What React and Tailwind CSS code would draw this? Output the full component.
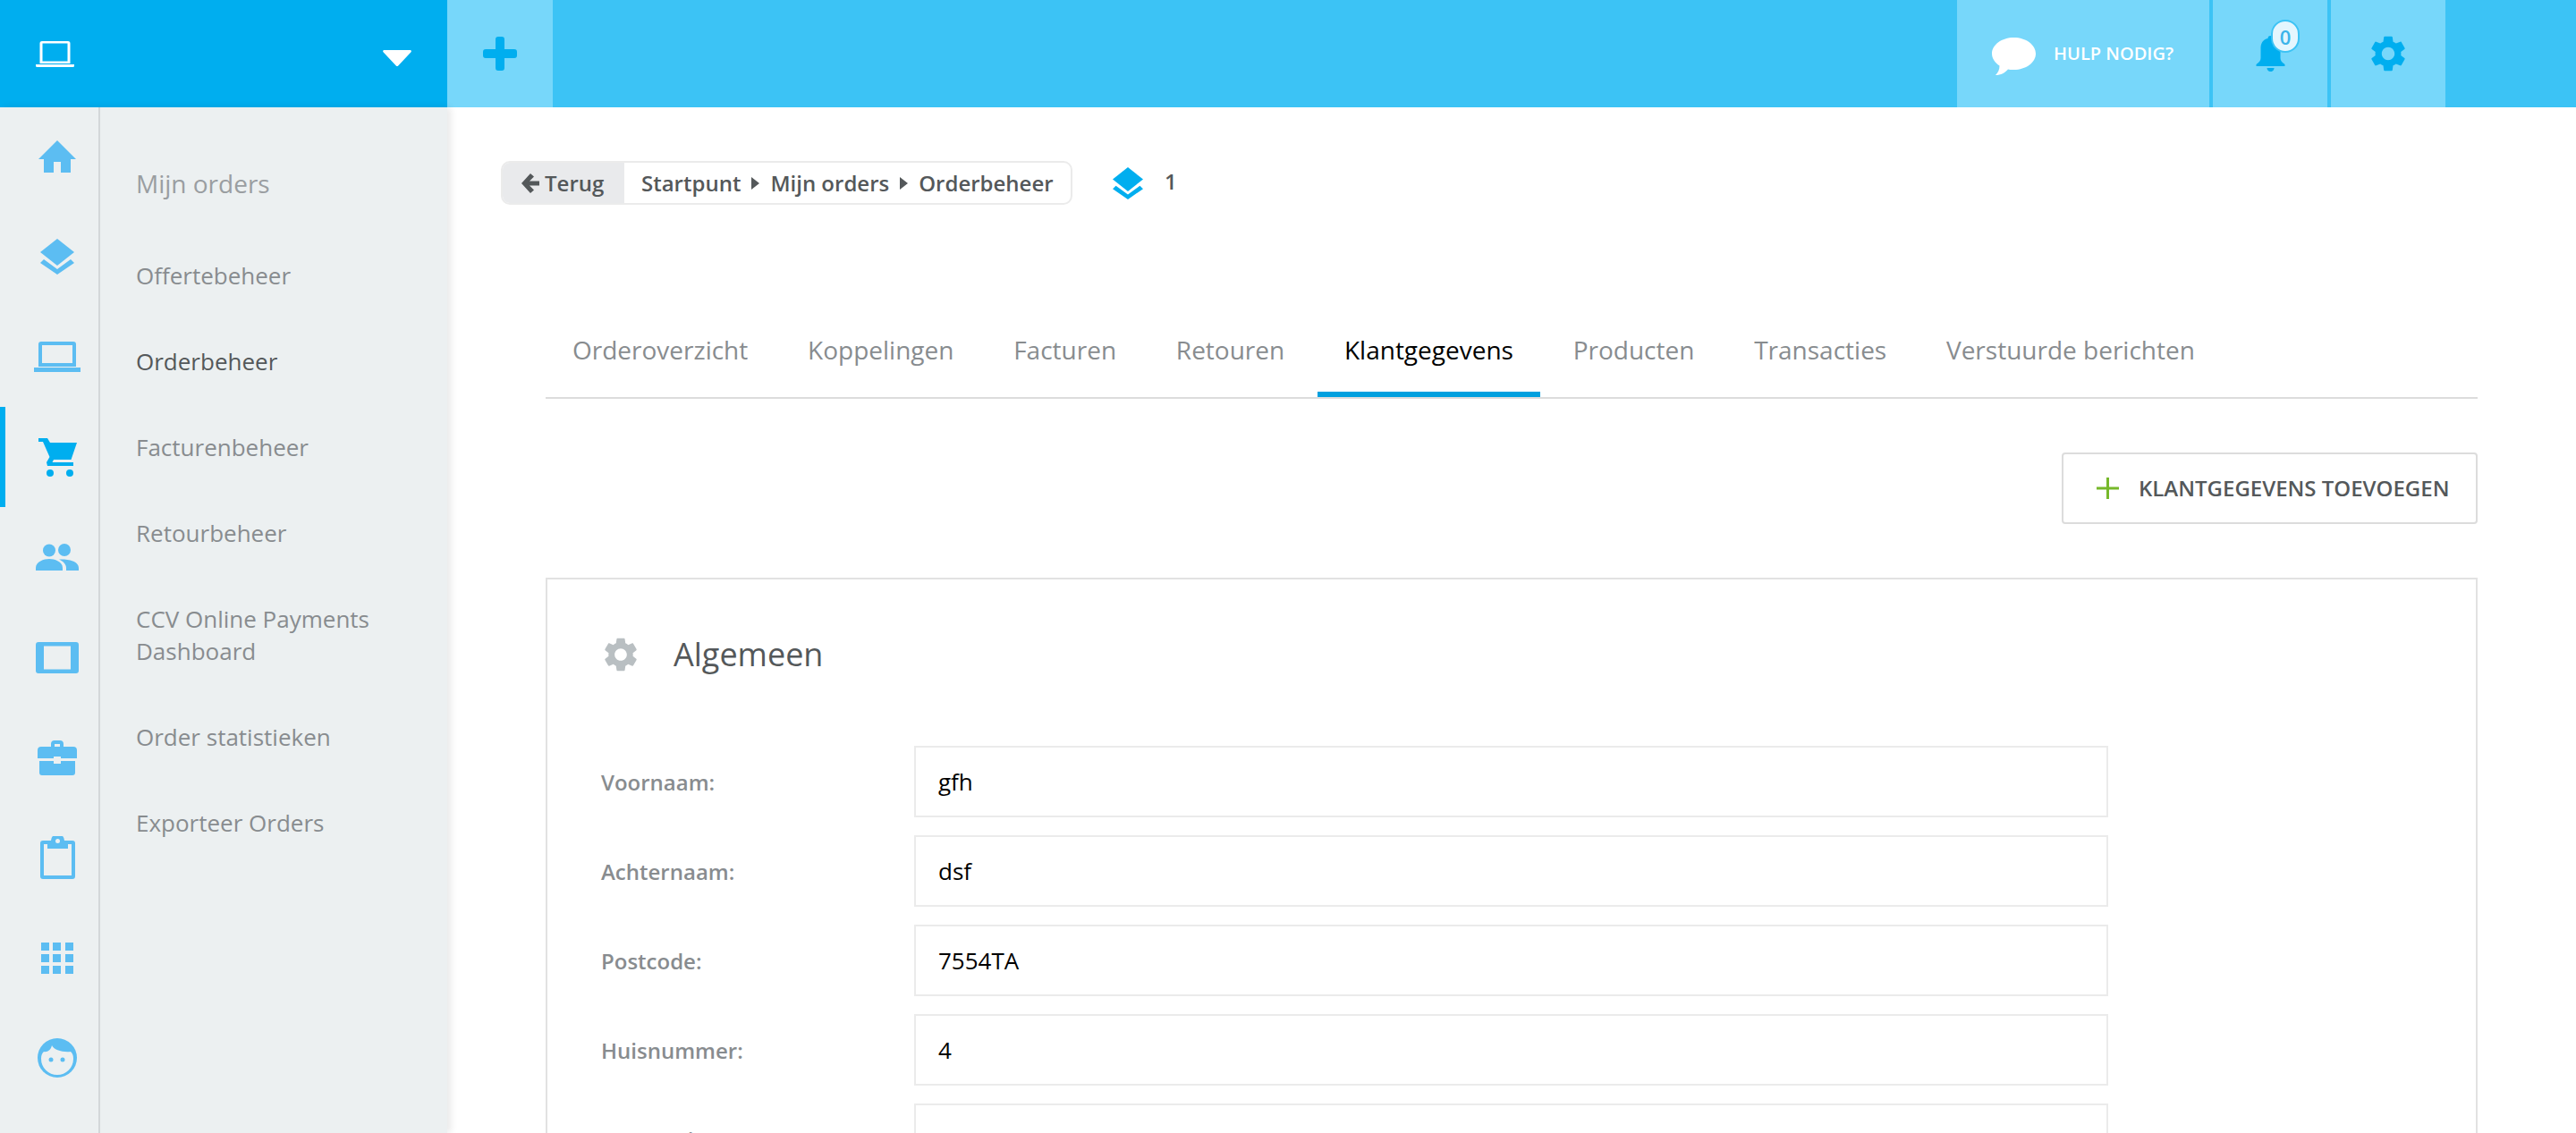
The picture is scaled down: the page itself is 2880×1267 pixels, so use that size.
const GEAR =
  "M19.14 12.94c.04-.3.06-.61.06-.94 0-.32-.02-.64-.07-.94l2.03-1.58c.18-.14.23-.41.12-.61l-1.92-3.32c-.12-.22-.37-.29-.59-.22l-2.39.96c-.5-.38-1.03-.7-1.62-.94l-.36-2.54c-.04-.24-.24-.41-.48-.41h-3.84c-.24 0-.43.17-.47.41l-.36 2.54c-.59.24-1.13.57-1.62.94l-2.39-.96c-.22-.08-.47 0-.59.22L2.74 8.87c-.12.21-.08.47.12.61l2.03 1.58c-.05.3-.09.63-.09.94s.02.64.07.94l-2.03 1.58c-.18.14-.23.41-.12.61l1.92 3.32c.12.22.37.29.59.22l2.39-.96c.5.38 1.03.7 1.62.94l.36 2.54c.05.24.24.41.48.41h3.84c.24 0 .44-.17.47-.41l.36-2.54c.59-.24 1.13-.56 1.62-.94l2.39.96c.22.08.47 0 .59-.22l1.92-3.32c.12-.22.07-.47-.12-.61l-2.01-1.58zM12 15.6c-1.98 0-3.6-1.62-3.6-3.6s1.62-3.6 3.6-3.6 3.6 1.62 3.6 3.6-1.62 3.6-3.6 3.6z";

function Gear({ className }) {
  return (
    <svg viewBox="2.6 2 18.8 20" className={className} fill="currentColor">
      <path d={GEAR} />
    </svg>
  );
}

function Layers({ className }) {
  return (
    <svg viewBox="0 0 38 40" className={className} fill="currentColor">
      <path d="M19 0l19 15-19 15L0 15z" />
      <path d="M4 23l15 11 15-11 4 4-19 13L0 27z" />
    </svg>
  );
}

function HomeIcon() {
  return (
    <svg viewBox="0 0 42 36" className="h-[36px] w-[42px]" fill="currentColor">
      <path d="M21 0l21 21h-6v15H25V24h-8v12H6V21H0z" />
    </svg>
  );
}

function LaptopIcon() {
  return (
    <svg viewBox="0 0 52 34" className="h-[34px] w-[52px]" fill="currentColor">
      <path fillRule="evenodd" d="M8 0h36a3 3 0 0 1 3 3v25H5V3a3 3 0 0 1 3-3zm1 4v20h34V4z" />
      <path d="M0 29h52v5H0z" />
    </svg>
  );
}

function CartIcon() {
  return (
    <svg viewBox="0 0 43 43" className="h-[43px] w-[43px]" fill="currentColor">
      <path d="M0 0h10l3 5h30l-6.500 19H17l-1.500 3H39v4H10l-1-4 3.500-6L5 4H0z" />
      <circle cx="13" cy="39" r="4" />
      <circle cx="35" cy="39" r="4" />
    </svg>
  );
}

function UsersIcon() {
  return (
    <svg viewBox="0 0 48 30" className="h-[30px] w-[48px]" fill="currentColor">
      <circle cx="15" cy="7.500" r="7" />
      <circle cx="32" cy="7" r="7" />
      <path d="M0 30v-3c0-7 9-10 15-10s15 3 15 10v3z" />
      <path d="M26 17.500c8-.5 22 1 22 9.500v3H34v-3c0-4-3-7-8-9.500z" />
    </svg>
  );
}

function TabletIcon() {
  return (
    <svg viewBox="0 0 48 35" className="h-[35px] w-[48px]" fill="currentColor">
      <path fillRule="evenodd" d="M3 0h42a3 3 0 0 1 3 3v29a3 3 0 0 1-3 3H3a3 3 0 0 1-3-3V3a3 3 0 0 1 3-3zm6 4.500v26h30v-26z" />
    </svg>
  );
}

function BriefcaseIcon() {
  return (
    <svg viewBox="0 0 44 39" className="h-[39px] w-[44px]" fill="currentColor">
      <path fillRule="evenodd" d="M15 7V4a4 4 0 0 1 4-4h6a4 4 0 0 1 4 4v3h11a4 4 0 0 1 4 4v9H26v-2h-8v2H0v-9a4 4 0 0 1 4-4zm4-3v3h6V4z" />
      <path d="M2 23h16v3h8v-3h16v13a3 3 0 0 1-3 3H5a3 3 0 0 1-3-3z" />
    </svg>
  );
}

function ClipboardIcon() {
  return (
    <svg viewBox="0 0 39 48" className="h-[48px] w-[39px]" fill="currentColor">
      <path fillRule="evenodd" d="M3 5h9a7.500 7.500 0 0 1 15 0h9a3 3 0 0 1 3 3v37a3 3 0 0 1-3 3H3a3 3 0 0 1-3-3V8a3 3 0 0 1 3-3zm1 4v35h31V9h-4v5H8V9zm15.500-6a2.500 2.500 0 1 0 0 5 2.500 2.500 0 0 0 0-5z" />
    </svg>
  );
}

function GridIcon() {
  return (
    <div className="grid w-[36px] grid-cols-3 gap-[4px]">
      {[...Array(9)].map((_, i) => (
        <span key={i} className="h-[9px] w-[9px] bg-current" />
      ))}
    </div>
  );
}

function FaceIcon() {
  return (
    <svg viewBox="0 0 44 44" className="h-[44px] w-[44px]">
      <circle cx="22" cy="22" r="22" fill="currentColor" />
      <path fill="#ecf0f1" d="M4 23c0-4 1-6 3-8 4 1 8-2 9-7 2 5 12 8 21 7 2 2 3 4 3 8a18 18 0 0 1-36 0z" />
      <circle cx="15" cy="24" r="2.500" fill="currentColor" />
      <circle cx="28" cy="24" r="2.500" fill="currentColor" />
    </svg>
  );
}

const RAIL = [
  { icon: <HomeIcon /> },
  { icon: <Layers className="h-[40px] w-[38px]" /> },
  { icon: <LaptopIcon /> },
  { icon: <CartIcon />, active: true },
  { icon: <UsersIcon /> },
  { icon: <TabletIcon /> },
  { icon: <BriefcaseIcon /> },
  { icon: <ClipboardIcon /> },
  { icon: <GridIcon /> },
  { icon: <FaceIcon /> },
];

const SUBMENU = [
  "Offertebeheer",
  "Orderbeheer",
  "Facturenbeheer",
  "Retourbeheer",
  "CCV Online Payments Dashboard",
  "Order statistieken",
  "Exporteer Orders",
];

const TABS = [
  "Orderoverzicht",
  "Koppelingen",
  "Facturen",
  "Retouren",
  "Klantgegevens",
  "Producten",
  "Transacties",
  "Verstuurde berichten",
];

const FIELDS = [
  ["Voornaam:", "gfh"],
  ["Achternaam:", "dsf"],
  ["Postcode:", "7554TA"],
  ["Huisnummer:", "4"],
  ["Toevoeging:", ""],
];

function Header() {
  return (
    <header className="flex h-[120px] shrink-0 bg-[#3cc3f5]">
      <div className="flex w-[500px] items-center justify-between bg-[#00aeef] pl-[40px] pr-[40px] text-white">
        <svg viewBox="0 0 43 29" className="h-[29px] w-[43px]" fill="currentColor">
          <path fillRule="evenodd" d="M7 0h29a2.500 2.500 0 0 1 2.500 2.500V25h-34V2.500A2.500 2.500 0 0 1 7 0zm.500 2.500V22.500h28V2.500z" />
          <path d="M0 26h43v1.500a1.500 1.500 0 0 1-1.500 1.500h-40A1.500 1.500 0 0 1 0 27.500z" />
        </svg>
        <svg viewBox="0 0 32 18" className="mt-[10px] h-[18px] w-[32px]" fill="currentColor">
          <path d="M1.500 0h29c1.200 0 1.800 1.300 1 2.200L17.200 17.400c-.6.800-1.800.8-2.400 0L.5 2.200C-.3 1.300.3 0 1.500 0z" />
        </svg>
      </div>
      <div className="flex w-[118px] items-center justify-center bg-[#77d7fa] text-[#00aeef]">
        <svg viewBox="0 0 38 38" className="h-[38px] w-[38px]" fill="currentColor">
          <path d="M14 3a3 3 0 0 1 3-3h4a3 3 0 0 1 3 3v11h11a3 3 0 0 1 3 3v4a3 3 0 0 1-3 3H24v11a3 3 0 0 1-3 3h-4a3 3 0 0 1-3-3V24H3a3 3 0 0 1-3-3v-4a3 3 0 0 1 3-3h11z" />
        </svg>
      </div>
      <div className="ml-auto mr-[146px] flex gap-[4px]">
        <div className="flex w-[282px] items-center bg-[#77d7fa] pl-[39px] text-white">
          <svg viewBox="0 0 49 42" className="mt-[6px] h-[42px] w-[49px]" fill="currentColor">
            <path d="M24.500 0C38 0 49 8 49 18s-11 18-24.500 18c-3 0-5-.3-6.500-.6C15 39 10 42 4 42c3-3 4.500-6.500 4.500-10.500C3.500 28 0 23.500 0 18 0 8 11 0 24.500 0z" />
          </svg>
          <span className="ml-[20px] text-[20px] font-semibold leading-none">HULP NODIG?</span>
        </div>
        <div className="relative flex w-[128px] items-center justify-center bg-[#77d7fa] text-[#00aeef]">
          <svg viewBox="0 0 33 40" className="h-[40px] w-[33px]" fill="currentColor">
            <path d="M16.500 0c2 0 3 1.300 3 3 6 1.200 8 6 8 11v11c0 3 2 5 4.500 6.500.8.700 1 2.500-.5 2.500h-30c-1.500 0-1.300-1.800-.5-2.500C3.500 30 5.500 28 5.500 25V14c0-5 2-9.800 8-11 0-1.700 1-3 3-3z" />
            <path d="M12.500 36h8c0 2-1.500 4-4 4s-4-2-4-4z" />
          </svg>
          <span className="absolute left-[65px] top-[22px] flex h-[37px] w-[32px] items-center justify-center rounded-[16px] border-2 border-[#3cc3f5] bg-[#e4f6fe] text-[22px] font-semibold leading-none text-[#3cb4ea]">
            0
          </span>
        </div>
        <div className="flex w-[128px] items-center justify-center bg-[#77d7fa] text-[#00aeef]">
          <Gear className="h-[40px] w-[38px]" />
        </div>
      </div>
    </header>
  );
}

function Sidebar() {
  return (
    <aside className="z-10 flex w-[500px] shrink-0 bg-[#ecf0f1] shadow-[4px_0_8px_rgba(0,0,0,0.09)]">
      <nav className="w-[112px] shrink-0 border-r-2 border-[#d3d7d9] text-[#5cbdf2]">
        <div className="-mt-px">
          {RAIL.map((item, i) => (
            <div
              key={i}
              className={
                item.active
                  ? "relative flex h-[112px] items-center justify-center pl-[18px] text-[#00aeef]"
                  : "relative flex h-[112px] items-center justify-center pl-[18px]"
              }
            >
              {item.active && <span className="absolute inset-y-0 left-0 w-[6px] bg-[#00aeef]" />}
              {item.icon}
            </div>
          ))}
        </div>
      </nav>
      <div className="pl-[40px] pr-[30px] pt-[65px]">
        <h2 className="text-[28px] leading-[40px] text-[#9a9ea1]">Mijn orders</h2>
        <ul className="mt-[65px] space-y-[60px]">
          {SUBMENU.map((label) => (
            <li
              key={label}
              className={
                label === "Orderbeheer"
                  ? "text-[26px] leading-[36px] text-[#54585a]"
                  : "text-[26px] leading-[36px] text-[#888c8f]"
              }
            >
              {label}
            </li>
          ))}
        </ul>
      </div>
    </aside>
  );
}

function Caret() {
  return <span className="mx-[12px] h-0 w-0 border-y-[7px] border-l-[9px] border-y-transparent border-l-[#54585a]" />;
}

function Breadcrumb() {
  return (
    <div className="-ml-[50px] flex items-center">
      <div className="flex h-[49px] w-[639px] overflow-hidden whitespace-nowrap rounded-[10px] border-2 border-[#ebebeb] text-[24px] font-semibold text-[#54585a]">
        <div className="flex w-[136px] shrink-0 items-center bg-[#e9eaec] pl-[21px]">
          <svg viewBox="0 0 20 22" className="mr-[6px] h-[22px] w-[20px]" fill="currentColor">
            <path d="M10 0l4 3.500-5 5h11v5H9l5 5-4 3.500L0 11z" />
          </svg>
          Terug
        </div>
        <div className="flex items-center pl-[19px]">
          Startpunt
          <Caret />
          Mijn orders
          <Caret />
          Orderbeheer
        </div>
      </div>
      <Layers className="ml-[45px] h-[38px] w-[34px] text-[#00aeef]" />
      <span className="mb-[4px] ml-[24px] text-[24px] font-semibold text-[#54585a]">1</span>
    </div>
  );
}

function Tabs() {
  return (
    <div className="mt-[142px] flex gap-[6.75px] border-b-2 border-[#dcdcdc]">
      {TABS.map((tab) => (
        <div
          key={tab}
          className={
            tab === "Klantgegevens"
              ? "border-b-[6px] border-[#00a0df] px-[30px] pb-[27px] text-[28px] leading-[40px] text-black"
              : "border-b-[6px] border-transparent px-[30px] pb-[27px] text-[28px] leading-[40px] text-[#888c8f]"
          }
        >
          {tab}
        </div>
      ))}
    </div>
  );
}

function Field({ label, value }) {
  return (
    <div className="flex items-center">
      <label className="w-[350px] shrink-0 pt-[2px] text-[24px] font-semibold text-[#888c8f]">{label}</label>
      <input
        readOnly
        defaultValue={value}
        className="h-[80px] w-[1335px] border-2 border-[#ebebeb] bg-white px-[25px] text-[26px] text-black outline-none"
      />
    </div>
  );
}

export default function App() {
  return (
    <div className="flex h-screen flex-col overflow-hidden bg-white font-['Open_Sans',sans-serif]">
      <Header />
      <div className="flex min-h-0 flex-1">
        <Sidebar />
        <main className="min-w-0 flex-1 px-[110px] pt-[60px]">
          <Breadcrumb />
          <Tabs />
          <div className="mt-[60px] flex justify-end">
            <button className="flex h-[80px] w-[465px] items-center rounded-[4px] border-2 border-[#dcdcdc] bg-white pl-[37px] text-[24px] font-semibold text-[#54585a]">
              <svg viewBox="0 0 25 24" className="h-[24px] w-[25px] text-[#76b82a]" fill="currentColor">
                <path d="M11 0h3v10.500h11v3H14V24h-3V13.500H0v-3h11z" />
              </svg>
              <span className="ml-[22px]">KLANTGEGEVENS TOEVOEGEN</span>
            </button>
          </div>
          <section className="mt-[60px] border-2 border-[#e2e2e2] pl-[60px] pt-[64px]">
            <div className="flex h-[40px] items-center">
              <Gear className="ml-[3px] h-[38px] w-[38px] text-[#b9bfc2]" />
              <h3 className="ml-[40px] text-[36px] text-[#54585a]">Algemeen</h3>
            </div>
            <div className="mt-[82px] space-y-[20px]">
              {FIELDS.map(([label, value]) => (
                <Field key={label} label={label} value={value} />
              ))}
            </div>
          </section>
        </main>
      </div>
    </div>
  );
}
